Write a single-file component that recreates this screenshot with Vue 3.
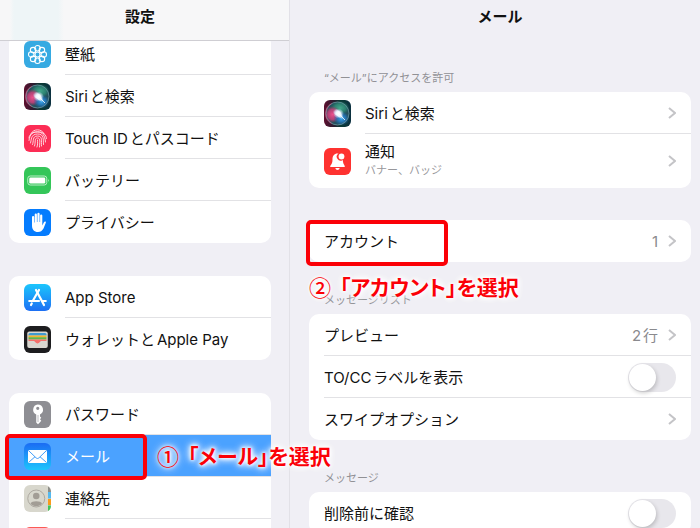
<template>
  <!-- アイコン定義 -->
  <svg class="icon-defs" aria-hidden="true">
    <defs>
      <linearGradient id="g-store" x1="0" y1="0" x2="0" y2="1">
        <stop offset="0" stop-color="#1cc6fd" />
        <stop offset="1" stop-color="#1d6ff3" />
      </linearGradient>
      <linearGradient id="g-mail" x1="0" y1="0" x2="0" y2="1">
        <stop offset="0" stop-color="#1b6cf3" />
        <stop offset="1" stop-color="#1cc4fd" />
      </linearGradient>
      <linearGradient id="g-siri" x1="0" y1="0" x2="1" y2="0">
        <stop offset="0" stop-color="#5e0f2e" />
        <stop offset="0.35" stop-color="#2a1c30" />
        <stop offset="0.6" stop-color="#0b3a34" />
        <stop offset="1" stop-color="#0b3040" />
      </linearGradient>
      <radialGradient id="g-siri-pink">
        <stop offset="0" stop-color="#ee4f8c" />
        <stop offset="0.6" stop-color="#c8407a" stop-opacity="0.85" />
        <stop offset="1" stop-color="#a13465" stop-opacity="0" />
      </radialGradient>
      <radialGradient id="g-siri-green">
        <stop offset="0" stop-color="#45a98d" />
        <stop offset="0.6" stop-color="#2f8d76" stop-opacity="0.8" />
        <stop offset="1" stop-color="#1d8068" stop-opacity="0" />
      </radialGradient>
      <radialGradient id="g-siri-blue">
        <stop offset="0" stop-color="#3fa9ee" />
        <stop offset="0.5" stop-color="#277fc8" stop-opacity="0.8" />
        <stop offset="1" stop-color="#1768b8" stop-opacity="0" />
      </radialGradient>
      <radialGradient id="g-siri-light">
        <stop offset="0" stop-color="#fff" />
        <stop offset="0.4" stop-color="#f2f8ff" stop-opacity="0.9" />
        <stop offset="1" stop-color="#cfe6ff" stop-opacity="0" />
      </radialGradient>
    </defs>

    <symbol id="icon-wallpaper" viewBox="0 0 54 54">
      <rect width="54" height="54" rx="12" fill="#36aae2" />
      <g fill="none" stroke="#fff" stroke-width="2.200">
        <circle cx="27" cy="27" r="5" />
        <circle cx="27" cy="14.500" r="5.500" />
        <circle cx="35.800" cy="18.200" r="5.500" />
        <circle cx="39.500" cy="27" r="5.500" />
        <circle cx="35.800" cy="35.800" r="5.500" />
        <circle cx="27" cy="39.500" r="5.500" />
        <circle cx="18.200" cy="35.800" r="5.500" />
        <circle cx="14.500" cy="27" r="5.500" />
        <circle cx="18.200" cy="18.200" r="5.500" />
      </g>
    </symbol>

    <symbol id="icon-siri" viewBox="0 0 54 54">
      <rect width="54" height="54" rx="12" fill="url(#g-siri)" />
      <circle cx="27" cy="27" r="23" fill="#24505c" />
      <ellipse cx="32" cy="16" rx="19" ry="14" fill="url(#g-siri-green)" />
      <ellipse cx="17" cy="29" rx="16" ry="17" fill="url(#g-siri-pink)" />
      <ellipse cx="35" cy="37" rx="16" ry="14" fill="url(#g-siri-blue)" />
      <circle cx="27" cy="27" r="23" fill="none" stroke="#6f9aa5" stroke-width="1.500" />
      <path d="M15 47A23 23 0 0 1 15 7" fill="none" stroke="#cf5f88" stroke-width="1.500" />
      <path d="M16 15c9 2 15 6 18 12l9 14c-8-3-14-7-17-10-5-2-10-8-10-16z" fill="url(#g-siri-light)" />
      <ellipse cx="29" cy="27" rx="11" ry="10" fill="url(#g-siri-light)" />
      <path d="M29 27l13 13" stroke="#fff" stroke-width="2" stroke-opacity="0.8" />
    </symbol>

    <symbol id="icon-touch" viewBox="0 0 54 54">
      <rect width="54" height="54" rx="12" fill="#fc2d55" />
      <g fill="none" stroke="#ffe3e9" stroke-width="1.800" stroke-linecap="round">
        <path d="M14 17C20 7 34 7 40 17" />
        <path d="M10 26C10 10 44 8 45 27" />
        <path d="M10 31C12 17 17 14 27 14S42 21 43 34" />
        <path d="M13 36C15 31 13 18 27 18S38 29 39 39" />
        <path d="M17 39C20 33 16 22 27 22S34 32 35 42" />
        <path d="M21 42C24 35 20 26 27 26S31 36 31 44" />
        <path d="M26 44C28 38 27 34 27 30" />
      </g>
    </symbol>

    <symbol id="icon-battery" viewBox="0 0 54 54">
      <rect width="54" height="54" rx="12" fill="#34c659" />
      <rect x="7.500" y="18" width="38" height="18" rx="5" fill="none" stroke="#c9f2d3" stroke-width="1.800" />
      <rect x="10.500" y="21" width="32" height="12" rx="2.500" fill="#fff" />
      <path d="M48 24v6q3-3 0-6z" fill="#c9f2d3" />
    </symbol>

    <symbol id="icon-privacy" viewBox="0 0 54 54">
      <rect width="54" height="54" rx="12" fill="#057cfe" />
      <path
        d="M16 33V16a2.200 2.200 0 0 1 4.400 0v11h1V11a2.200 2.200 0 0 1 4.400 0v15h1V9.500a2.200 2.200 0 0 1 4.400 0V26h1V13a2.200 2.200 0 0 1 4.400 0v20l3-6c1-3 5-3 4 .5L39 39c-3 5-6 7-11 7-8 0-12-5-12-13z"
        fill="#fff"
      />
    </symbol>

    <symbol id="icon-store" viewBox="0 0 54 54">
      <rect width="54" height="54" rx="12" fill="url(#g-store)" />
      <g fill="none" stroke="#fff" stroke-width="4.400" stroke-linecap="round">
        <path d="M30 12L18 33" />
        <path d="M24 12L40 42" />
        <path d="M10.500 34H30" />
        <path d="M37 34h6.500" />
        <path d="M15.500 39L14 42" />
      </g>
    </symbol>

    <symbol id="icon-wallet" viewBox="0 0 54 54">
      <rect width="54" height="54" rx="12" fill="#1d1d1f" />
      <rect x="6.500" y="11" width="41" height="33" rx="4" fill="#d9d7d0" />
      <path d="M9 17q0-3 3-3h30q3 0 3 3v2H9z" fill="#3f9ad0" />
      <path d="M9 19h36v4H9z" fill="#f6b42c" />
      <path d="M9 22.500h36V27H9z" fill="#61b64b" />
      <path d="M9 27h36v3H34c-2 0-3 5-7 5s-5-5-7-5H9z" fill="#f5706b" />
    </symbol>

    <symbol id="icon-password" viewBox="0 0 54 54">
      <rect width="54" height="54" rx="12" fill="#8e8e93" />
      <path
        fill-rule="evenodd"
        d="M27.500 7a10.500 10.500 0 0 1 4.500 20v4l2.500 2.500-2.500 3 2.500 3-2.500 3L28 46.500l-3.500-3.500V27a10.500 10.500 0 0 1 3-20zm0 4.500a3.200 3.200 0 1 0 0 6.400 3.200 3.200 0 0 0 0-6.400z"
        fill="#fff"
      />
      <path d="M28 28v14" stroke="#8e8e93" stroke-width="1.200" />
    </symbol>

    <symbol id="icon-mail" viewBox="0 0 54 54">
      <rect width="54" height="54" rx="12" fill="url(#g-mail)" />
      <rect x="8" y="14" width="38" height="26" rx="3" fill="#fff" />
      <path
        d="M9.500 15.500l15 14.500q2.500 2 5 0l15-14.500M9.500 38.500L22 27.500M44.500 38.500L32 27.500"
        fill="none"
        stroke="#2b92f8"
        stroke-width="1.800"
      />
    </symbol>

    <symbol id="icon-contacts" viewBox="0 0 54 54">
      <rect width="54" height="54" rx="12" fill="#d8d7cd" />
      <path d="M48 3q6 3 6 11H48z" fill="#8d8d88" />
      <path d="M48 14h6v13h-6z" fill="#55b9ee" />
      <path d="M48 28h6v12h-6z" fill="#f99b1c" />
      <path d="M48 41h6q0 8-6 11z" fill="#3fc657" />
      <circle cx="24.500" cy="27" r="17" fill="none" stroke="#a29d95" stroke-width="1.600" />
      <circle cx="24.500" cy="22" r="6.500" fill="#a29d95" />
      <path d="M13 37c2-6 21-6 23 0-5 7-18 7-23 0z" fill="#a29d95" />
    </symbol>

    <symbol id="icon-calendar" viewBox="0 0 54 54">
      <rect width="54" height="54" rx="12" fill="#fb5a55" />
    </symbol>

    <symbol id="icon-notice" viewBox="0 0 54 54">
      <rect width="54" height="54" rx="12" fill="#fe3230" />
      <path
        d="M29 11c-8-1-12 4-12 12 0 7-2 9-4 12-1 2-1 3 1 3h26c2 0 2-1 1-3-2-3-3-6-3.500-11a7.500 7.500 0 0 1-8.500-13z"
        fill="#fff"
      />
      <path d="M22.500 40h9q-1 4-4.500 4t-4.500-4z" fill="#fff" />
      <circle cx="35" cy="17" r="5.800" fill="#fff" />
    </symbol>
  </svg>

  <div class="settings">
    <!-- 左：設定一覧 -->
    <aside class="sidebar">
      <header class="sidebar-header">
        <h1 class="title">設定</h1>
      </header>
      <nav class="sidebar-list">
        <ul v-for="(group, i) in menuGroups" :key="i" class="card">
          <li v-for="item in group" :key="item.icon" class="item">
            <a
              href="#"
              class="row"
              :class="{ active: item.icon === selected }"
              @click.prevent="selected = item.icon"
            >
              <svg class="icon" aria-hidden="true"><use :href="'#icon-' + item.icon" /></svg>
              <span class="label">{{ item.label }}</span>
            </a>
            <template v-if="item.icon === 'mail'">
              <span class="mark mark-mail"></span>
              <p class="note note-mail"><span class="num">①</span>「メール」を選択</p>
            </template>
          </li>
        </ul>
      </nav>
    </aside>

    <!-- 右：メール設定 -->
    <main class="detail">
      <h2 class="title">メール</h2>

      <h3 class="caption caption-first">“メール”にアクセスを許可</h3>
      <ul class="card">
        <li class="item">
          <button type="button" class="row">
            <svg class="icon" aria-hidden="true"><use href="#icon-siri" /></svg>
            <span class="label">Siriと検索</span>
            <svg class="chevron" viewBox="0 0 8 12" aria-hidden="true"><path d="M1 1l6 5-6 5" /></svg>
          </button>
        </li>
        <li class="item">
          <button type="button" class="row row-tall">
            <svg class="icon" aria-hidden="true"><use href="#icon-notice" /></svg>
            <span class="label">通知<small>バナー、バッジ</small></span>
            <svg class="chevron" viewBox="0 0 8 12" aria-hidden="true"><path d="M1 1l6 5-6 5" /></svg>
          </button>
        </li>
      </ul>

      <ul class="card plain card-account">
        <li class="item">
          <button type="button" class="row">
            <span class="label">アカウント</span>
            <span class="value">1</span>
            <svg class="chevron" viewBox="0 0 8 12" aria-hidden="true"><path d="M1 1l6 5-6 5" /></svg>
          </button>
          <span class="mark mark-account"></span>
          <p class="note note-account"><span class="num">②</span>「アカウント」を選択</p>
        </li>
      </ul>

      <h3 class="caption">メッセージリスト</h3>
      <ul class="card plain">
        <li class="item">
          <button type="button" class="row">
            <span class="label">プレビュー</span>
            <span class="value">2行</span>
            <svg class="chevron" viewBox="0 0 8 12" aria-hidden="true"><path d="M1 1l6 5-6 5" /></svg>
          </button>
        </li>
        <li class="item">
          <label class="row" for="show-label">
            <span class="label">TO/CCラベルを表示</span>
            <input id="show-label" v-model="showLabel" type="checkbox" class="switch" />
          </label>
        </li>
        <li class="item">
          <button type="button" class="row">
            <span class="label">スワイプオプション</span>
            <svg class="chevron" viewBox="0 0 8 12" aria-hidden="true"><path d="M1 1l6 5-6 5" /></svg>
          </button>
        </li>
      </ul>

      <h3 class="caption">メッセージ</h3>
      <ul class="card plain">
        <li class="item">
          <label class="row" for="confirm-delete">
            <span class="label">削除前に確認</span>
            <input id="confirm-delete" v-model="confirmDelete" type="checkbox" class="switch" />
          </label>
        </li>
      </ul>
    </main>
  </div>
</template>

<script setup>
import { ref } from "vue";

// 左メニューの項目
const menuGroups = [
  [
    { icon: "wallpaper", label: "壁紙" },
    { icon: "siri", label: "Siriと検索" },
    { icon: "touch", label: "Touch IDとパスコード" },
    { icon: "battery", label: "バッテリー" },
    { icon: "privacy", label: "プライバシー" }
  ],
  [
    { icon: "store", label: "App Store" },
    { icon: "wallet", label: "ウォレットとApple Pay" }
  ],
  [
    { icon: "password", label: "パスワード" },
    { icon: "mail", label: "メール" },
    { icon: "contacts", label: "連絡先" },
    { icon: "calendar", label: "" }
  ]
];

const selected = ref("mail");
const showLabel = ref(false);
const confirmDelete = ref(false);
</script>

<style>
body {
  background-color: #f0eff5;
}
</style>

<style scoped>
.icon-defs {
  position: absolute;
  width: 0;
  height: 0;
}

.settings {
  display: grid;
  grid-template-columns: 29fr 41fr;
  height: 100vh;
  overflow: hidden;
  background-color: #f0eff5;
  color: #111;
  font-family: Inter, "Noto Sans CJK JP", sans-serif;
  font-size: 15px;
  line-height: 20px;
  text-autospace: normal;
}

.title {
  margin: 0;
  font-size: 15px;
  font-weight: 700;
  line-height: 20px;
  text-align: center;
}

/* 左カラム */
.sidebar {
  position: relative;
  z-index: 1;
  border-right: 1px solid #e2e1e7;
}

.sidebar-header {
  position: relative;
  z-index: 1;
  padding: 7px 18px 13px 9px;
  background: linear-gradient(90deg, #f7f7f8 10px, #eef5f7 14px, #eef5f7 58px, #f7f7f8 64px);
  border-bottom: 1px solid #cfced3;
}

.sidebar-list {
  display: flex;
  flex-direction: column;
  gap: 33px;
  margin-top: -8px;
  padding: 0 18px 0 9px;
}

/* 共通カード */
.card {
  margin: 0;
  padding: 0;
  list-style: none;
  background-color: #fff;
  border-radius: 10px;
}

.item {
  position: relative;
}

.item + .item::before {
  content: "";
  position: absolute;
  top: -1px;
  left: 56px;
  right: 0;
  height: 1px;
  background-color: #e2e2e5;
}

.plain .item + .item::before {
  left: 15px;
}

.row {
  display: flex;
  align-items: center;
  width: 100%;
  height: 42px;
  padding: 0 15px;
  box-sizing: border-box;
  border: none;
  background: none;
  color: inherit;
  font: inherit;
  text-align: left;
  text-decoration: none;
  cursor: pointer;
}

.row-tall {
  height: 54px;
}

.row.active {
  background-color: #4ba2ff;
  color: #fff;
}

.icon {
  flex: none;
  width: 27px;
  height: 27px;
  margin-right: 14px;
}

.label {
  flex: 1;
  padding-top: 2px;
  white-space: nowrap;
}

.row-tall .label {
  padding: 0 0 2px;
}

.label small {
  display: block;
  color: #97979b;
  font-size: 11px;
  line-height: 16px;
}

.value {
  padding-top: 2px;
  color: #8a8a8e;
}

.chevron {
  flex: none;
  width: 8px;
  height: 12px;
  margin-left: 10px;
  fill: none;
  stroke: #c4c4c7;
  stroke-width: 2;
}

/* スイッチ */
.switch {
  appearance: none;
  flex: none;
  width: 48px;
  height: 29px;
  margin: 0;
  padding: 1px;
  background-color: #e8e7ec;
  border-radius: 15px;
  cursor: pointer;
}

.switch::before {
  content: "";
  display: block;
  width: 27px;
  height: 27px;
  background-color: #fff;
  border-radius: 50%;
  box-shadow: 1px 2px 4px rgba(0, 0, 0, 0.2);
}

.switch:checked {
  background-color: #34c659;
}

.switch:checked::before {
  margin-left: auto;
}

/* 右カラム */
.detail {
  padding: 7px 9px 0 19px;
}

.caption {
  margin: 0;
  padding: 30px 15px 6px;
  color: #919195;
  font-size: 11px;
  font-weight: 400;
  line-height: 16px;
}

.caption-first {
  padding-top: 43px;
}

.card-account {
  margin-top: 32px;
}

/* 手順の赤枠と説明 */
.mark {
  position: absolute;
  z-index: 2;
  box-sizing: border-box;
  width: 142px;
  height: 46px;
  border: 4px solid #fb0007;
  border-radius: 5px;
  pointer-events: none;
}

.mark-mail {
  top: -1px;
  left: -4px;
}

.mark-account {
  top: 0;
  left: -3px;
}

.note {
  position: absolute;
  z-index: 2;
  display: flex;
  gap: 9px;
  margin: 0;
  color: #fb0007;
  font-family: "Noto Sans CJK JP", sans-serif;
  font-size: 21px;
  font-weight: 700;
  font-feature-settings: "palt";
  line-height: 30px;
  white-space: nowrap;
  text-shadow: 0 0 3px #fff, 0 0 4px #fff, 0 0 6px #fff, 0 0 8px #fff, 0 0 10px #fff;
  pointer-events: none;
}

.num {
  font-size: 22px;
  font-weight: 500;
}

.note-mail {
  top: 5px;
  left: 148px;
}

.note-account {
  top: 51px;
  left: 0;
}
</style>
